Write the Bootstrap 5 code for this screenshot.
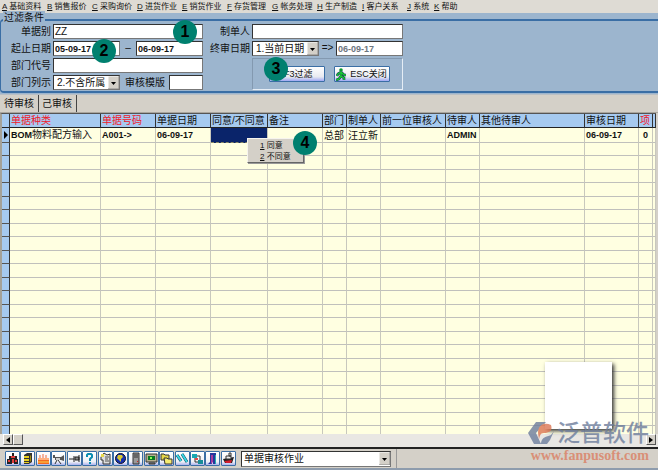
<!DOCTYPE html>
<html lang="zh-CN">
<head>
<meta charset="utf-8">
<meta name="viewport" content="width=device-width, initial-scale=1">
<title>单据审核作业</title>
<link href="https://cdn.jsdelivr.net/npm/bootstrap@5.3.0/dist/css/bootstrap.min.css" rel="stylesheet">
<style>
body{background:#d4d0c8;color:#111;font:10px/14px "Liberation Sans","Noto Sans CJK SC",sans-serif}
input,select,button{font:inherit;color:inherit;border-radius:0}
.menu-bar{height:13px;padding-left:2px;font-size:8px;line-height:13px;background:#dedbd4}
.menu-bar a{color:#111;text-decoration:none;white-space:nowrap;flex:0 0 45px}
.menu-bar a.narrow{flex-basis:27px}
.filter{position:relative;height:81px;background:#9cb5ce;padding-top:6px}
.filter-frame{margin:0;height:74px;border:1px solid #3a6ea5;border-width:2px 0 2px 1px;border-radius:4px 0 0 4px;padding:3px 0 0 0}
.filter-title{position:absolute;left:3px;top:-2px;background:#9cb5ce;padding:0 1px;line-height:14px;font-size:10px;width:auto;float:none;margin:0}
.form-grid{display:grid;grid-template-columns:50px 150px 45px 151px;column-gap:2px;grid-auto-rows:15px;row-gap:2px}
.form-grid label{text-align:right;white-space:nowrap;line-height:15px}
.field{border:1px solid #777;border-top-color:#333;border-left-color:#333;background:#fff;height:15px;padding:0 1px;min-width:0;line-height:12px}
.date{font-weight:700;font-size:9px}
.pick{appearance:none;border:1px solid #777;border-top-color:#333;border-left-color:#333;height:15px;padding:0 12px 0 3px;line-height:12px;min-width:0;background:#fff url("data:image/svg+xml,%3Csvg xmlns='http://www.w3.org/2000/svg' width='11' height='13'%3E%3Cpath d='M0 0h11v13H0z' fill='%23d4d0c8'/%3E%3Cpath d='M0 13V0h11' fill='none' stroke='%23fff'/%3E%3Cpath d='M11 0v13H0' fill='none' stroke='%23888'/%3E%3Cpath d='M3 6h5L5.500 9z'/%3E%3C/svg%3E") right center no-repeat}
.w-date{width:67px}
.w-tpl{width:34px}
.cmd-box{grid-row:span 2;border:1px solid #8399b0;border-right-color:#e5edf5;border-bottom-color:#e5edf5;gap:9px;padding-left:3px}
.cmd{width:56px;height:16px;border:1px solid #3a6ea5;border-radius:1px;padding:0;font-size:9px;line-height:12px;background:linear-gradient(#fff,#e8eaf0 70%,#9fa8f4);white-space:nowrap}
.cmd-filter{padding-right:11px}
.step{position:absolute;width:24px;height:24px;border-radius:50%;background:#00806f;color:#000;font-weight:700;font-size:16px;line-height:24px;text-align:center;z-index:5}
.s1{left:173px;top:20px}.s2{left:92px;top:39px}.s3{left:264px;top:57px}.s4{left:293px;top:131px}
.tabs{height:19px;border-bottom:1px solid #aaa69e;border-top:1px solid #b9bfc5}
.tabs button{border:0;border-right:1px solid #444;background:none;padding:0 4px 0 3px;height:17px;line-height:17px}
.tabs button:first-child{padding-left:4px}
.grid-pane{flex:1 1 0;min-height:0;overflow:hidden;background:#ffffe1;border-left:2px solid #a5a299;border-top:1px solid #555;margin-right:2px}
.sheet{width:100%;table-layout:fixed;border-collapse:separate;border-spacing:0;white-space:nowrap}
.sheet th,.sheet td{padding:0 0 0 1px;overflow:hidden;height:13px;line-height:12px;border-right:1px solid #c8c8bd;border-bottom:1px solid #c0c0bc}
.sheet tr:nth-child(odd) td{height:14px;line-height:13px}
.sheet thead th{height:14px;line-height:13px;font-weight:400;background:#a6caf0;border-right:1px solid #333;border-bottom:1px solid #222}
.sheet thead th.hot{color:#f01828}
.sheet td:first-child{background:#a6caf0;border-right-color:#333;border-bottom-color:#555}
.sheet .lat{font-weight:700;font-size:9px}
.sheet td.picked{background:#0a246a;border-bottom:1px dashed #886}
.popup{position:absolute;left:247px;top:138px;width:57px;height:25px;background:#d4d0c8;border:1px solid #f6f4ee;border-right-color:#666;border-bottom-color:#666;padding:1px 0 0 12px;font-size:8px;z-index:4;margin:0;list-style:none;box-shadow:1px 1px 0 #999}
.popup button{display:block;border:0;background:none;padding:0;line-height:11px;height:11px}
.scroll-strip{height:13px;background:#e9e7e3;padding:0 2px 0 3px}
.knob{width:10px;height:11px;padding:0;background:#d4d0c8;border:1px solid #fff;border-right-color:#555;border-bottom-color:#555;display:flex;align-items:center;justify-content:center}
.tool-strip{height:21px;border-top:2px solid #222;padding-left:5px}
.tool-set{width:231px}
.tool{width:15px;height:15px;padding:0;border:1px solid #3a6ea5;border-radius:1px;background:linear-gradient(#fff,#eef0f5 75%,#abb2ee);display:flex}
.tool svg{width:13px;height:13px}
.status-pick{width:150px;height:16px;margin-left:5px;padding-left:2px}
.tool-tail{flex:1;height:100%;border-left:1px solid #999;margin-left:5px}
.blank-note{position:absolute;right:46px;bottom:41px;width:67px;height:67px;background:#fff;box-shadow:2px 2px 4px #333;z-index:2}
.brand{position:absolute;right:9px;bottom:8px;width:121px;z-index:3;opacity:.8}
.brand-name{font-size:23px;line-height:23px;color:#6d7d9c;font-weight:500}
.brand-url{font:700 14px/13px "Liberation Serif",serif;color:#db8063;text-align:right}
.base-line{height:2px;background:#8e9cad}
</style>
<script src="https://cdn.jsdelivr.net/npm/bootstrap@5.3.0/dist/js/bootstrap.bundle.min.js"></script>
</head>
<body class="position-relative overflow-hidden">
<div class="d-flex flex-column vh-100">
<nav class="menu-bar d-flex">
<a href="#"><u>A</u> 基础资料</a><a href="#"><u>B</u> 销售报价</a><a href="#"><u>C</u> 采购询价</a><a href="#"><u>D</u> 进货作业</a><a href="#"><u>E</u> 销货作业</a><a href="#"><u>F</u> 存货管理</a><a href="#"><u>G</u> 帐务处理</a><a href="#"><u>H</u> 生产制造</a><a href="#"><u>I</u> 客户关系</a><a href="#" class="narrow"><u>J</u> 系统</a><a href="#" class="narrow"><u>K</u> 帮助</a>
</nav>
<form class="filter">
<fieldset class="filter-frame">
<legend class="filter-title">过滤条件</legend>
<div class="form-grid">
<label for="kind">单据别</label><input class="field" id="kind" value="ZZ">
<label for="maker">制单人</label><input class="field" id="maker">
<label for="from">起止日期</label>
<div class="d-flex justify-content-between"><input class="field date w-date" id="from" value="05-09-17"><span>–</span><input class="field date w-date" aria-label="截止日期" value="06-09-17"></div>
<label for="final">终审日期</label>
<div class="d-flex justify-content-between"><select class="pick w-date" id="final"><option>1.当前日期</option></select><span>=&gt;</span><input class="field date w-date text-secondary" aria-label="终审截止" value="06-09-17"></div>
<label for="dept">部门代号</label><input class="field" id="dept"><span></span>
<div class="cmd-box d-flex justify-content-center align-items-center">
<button type="button" class="cmd cmd-filter text-end">F3过滤</button>
<button type="button" class="cmd d-flex align-items-center justify-content-center gap-1"><svg width="10" height="13" viewBox="0 0 10 13"><circle cx="5" cy="2" r="1.800" fill="#0a9a30"/><path d="M5 4 2 6 1 8M5 4l3 3h2M5 4v4l3 2v2M5 8l-2 3-3 1" fill="none" stroke="#12305a" stroke-width="2.600"/><path d="M5 4 2 6 1 8M5 4l3 3h2M5 4v4l3 2v2M5 8l-2 3-3 1" fill="none" stroke="#19c832" stroke-width="1.500"/></svg>ESC关闭</button>
</div>
<label for="list">部门列示</label>
<div class="d-flex justify-content-between"><select class="pick w-date" id="list"><option>2.不含所属</option></select><div class="d-flex"><label for="tpl">审核模版</label><input class="field w-tpl ms-1" id="tpl"></div></div>
</div>
</fieldset>
</form>
<div class="tabs d-flex" role="tablist"><button type="button" role="tab" aria-selected="true">待审核</button><button type="button" role="tab">己审核</button></div>
<main class="grid-pane">
<table class="sheet">
<colgroup><col style="width:8px"><col style="width:91px"><col style="width:55px"><col style="width:55px"><col style="width:57px"><col style="width:55px"><col style="width:24px"><col style="width:34px"><col style="width:65px"><col style="width:34px"><col><col style="width:54px"><col style="width:14px"><col style="width:3px"></colgroup>
<thead><tr><th></th><th class="hot">单据种类</th><th class="hot">单据号码</th><th>单据日期</th><th>同意/不同意</th><th>备注</th><th>部门</th><th>制单人</th><th>前一位审核人</th><th>待审人</th><th>其他待审人</th><th>审核日期</th><th class="hot">项</th><th></th></tr></thead>
<tbody id="rows"><tr><td><svg class="d-block" width="5" height="8" viewBox="0 0 5 8"><path d="M1 0v8l4-4z"/></svg></td><td><span class="lat">BOM</span>物料配方输入</td><td class="lat">A001-&gt;</td><td class="lat">06-09-17</td><td class="picked"></td><td></td><td>总部</td><td>汪立新</td><td></td><td class="lat">ADMIN</td><td></td><td class="lat">06-09-17</td><td class="lat text-end pe-1">0</td><td></td></tr></tbody>
</table>
</main>
<div class="scroll-strip d-flex"><button class="knob" aria-label="向左"><svg width="4" height="6"><path d="M4 0v6L0 3z"/></svg></button><button class="knob" aria-label="滑块"></button><button class="knob ms-auto" aria-label="向右"><svg width="4" height="6"><path d="M0 0v6l4-3z"/></svg></button></div>
<footer class="tool-strip d-flex align-items-center">
<div class="tool-set d-flex justify-content-between">
<button class="tool" aria-label="组织"><svg viewBox="0 0 13 13"><path d="M6 1h2v3h3v3h1v5H8V9H6v3H1V7h2V4h3z" fill="#222"/><path d="M5 4h4v2H5zM2 8h2v2H2zM9 8h2v2H9zM6 7h2v4H6z" fill="#e23b3b"/></svg></button>
<button class="tool" aria-label="资料柜"><svg viewBox="0 0 13 13"><path d="m3 3 3-2h5v9l-3 2H3z" fill="#333"/><path d="M3 4h5v2H3zm0 3h5v2H3zm0 3h5v1H3z" fill="#e7cf20"/><path d="m9 4 1-1v6l-1 1z" fill="#9c8a10"/></svg></button>
<button class="tool" aria-label="蛋糕"><svg viewBox="0 0 13 13"><path d="M1 6h11v6H1z" fill="#f26a20"/><path d="M1 6h11v2H1z" fill="#ffb080"/><path d="M3 3v3m3-4v4m3-3v3" stroke="#ee6a40"/><path d="M1 10h11" stroke="#ffd44c"/></svg></button>
<button class="tool" aria-label="摄像"><svg viewBox="0 0 13 13"><path d="M1 3h2v2h6l3-2v6L9 8H3V6H1z" fill="#555"/><path d="M4 6h4v2H4z" fill="#ccc"/><path d="m5 8-2 4m3-4 3 4" stroke="#333"/></svg></button>
<button class="tool" aria-label="固定"><svg viewBox="0 0 13 13"><path d="M1 7h5" stroke="#222"/><path d="M6 4v6M7 5h4v3H7zM11 3v7" fill="#888" stroke="#222"/></svg></button>
<button class="tool" aria-label="帮助"><svg viewBox="0 0 13 13"><path d="M4 5V3l1-1h3l1 1v2L7 7v2M7 10v2" fill="none" stroke="#0b8db0" stroke-width="2"/></svg></button>
<button class="tool" aria-label="主页"><svg viewBox="0 0 13 13"><path d="M2 5 5 1l3 2 3-1v10H4V8H2z" fill="#ddd" stroke="#333"/><path d="M2 2h3v3H2z" fill="#e8d84b"/><path d="M6 5h4M6 7h3m-3 2h4" stroke="#555"/></svg></button>
<button class="tool" aria-label="网络"><svg viewBox="0 0 13 13"><circle cx="6.500" cy="6.500" r="5" fill="#1630b0" stroke="#112"/><path d="M4 3h4l1 2-2 2v3L5 8 3 6z" fill="#d8c832"/></svg></button>
<button class="tool" aria-label="主机"><svg viewBox="0 0 13 13"><path d="M4 1h6v11H4z" fill="#999" stroke="#333"/><path d="M5 3h4M5 5h4" stroke="#333"/><path d="M8 9h1v1H8z" fill="#d22"/></svg></button>
<button class="tool" aria-label="显示器"><svg viewBox="0 0 13 13"><path d="M1 2h11v8H1zM4 11h6v1H4z" fill="#b5b090" stroke="#333"/><path d="M3 4h7v4H3z" fill="#087820"/><path d="M5 5h2v2H5z" fill="#8f5"/></svg></button>
<button class="tool" aria-label="文件夹"><svg viewBox="0 0 13 13"><path d="M1 2h3l1 1h4v5H1z" fill="#e5d549" stroke="#333"/><path d="M4 6h3l1 1h4v5H5z" fill="#f5eb71" stroke="#333"/></svg></button>
<button class="tool" aria-label="工具"><svg viewBox="0 0 13 13"><path d="m1 3 4 6M6 2l5 8" stroke="#145" stroke-width="3"/><path d="m1 3 4 6M6 2l5 8" stroke="#39d6e4" stroke-width="2"/></svg></button>
<button class="tool" aria-label="流程"><svg viewBox="0 0 13 13"><path d="M4 4h5v5M4 4v6h4" fill="none" stroke="#333"/><path d="M1 2h5v4H1z" fill="#19a7b2"/><path d="M7 8h5v4H7z" fill="#198e98"/><path d="M4 6h3v2H4z" fill="#e54949"/></svg></button>
<button class="tool" aria-label="退出"><svg viewBox="0 0 13 13"><path d="M4 1h6v11H7V3H6v9H2l2-2z" fill="#25369c"/><path d="M5 3h2v7l-2 2z" fill="#a83a9c"/><path d="M9 3h1v9H9z" fill="#22aeb0"/></svg></button>
<button class="tool" aria-label="轮船"><svg viewBox="0 0 13 13"><path d="m1 7 11-2-2 6H3z" fill="#222"/><path d="M4 4h5v3H4zM7 1h2v3H7z" fill="#eee" stroke="#333"/><path d="m2 9 8-1-1 3H4z" fill="#d31c2c"/></svg></button>
</div>
<select class="pick status-pick" aria-label="当前作业"><option>单据审核作业</option></select>
<div class="tool-tail"></div>
</footer>
<div class="base-line"></div>
</div>
<span class="step s1">1</span><span class="step s2">2</span><span class="step s3">3</span><span class="step s4">4</span>
<ul class="popup"><li><button type="button"><u>1</u> 同意</button></li><li><button type="button"><u>2</u> 不同意</button></li></ul>
<div class="blank-note"></div>
<div class="brand"><div class="d-flex align-items-center justify-content-between mb-1"><svg width="27" height="23" viewBox="0 0 27 23"><path d="M8 0h10L8 11l5 11H6L0 11z" fill="#6d7d9c"/><path d="M10 11c0-9 7-11 13-8 2 6-2 8-7 8-4 0-4 3-5 6z" fill="#dc7653"/><path d="M13 21c1-6 5-6 10-8l3-4-4 9-3 4h-7z" fill="#6d7d9c"/></svg><span class="brand-name">泛普软件</span></div><div class="brand-url">www.fanpusoft.com</div></div>
<script>
const rows = document.getElementById('rows');
for (let i = 0; i < 60; i++) {
  const tr = rows.insertRow();
  for (let c = 0; c < 14; c++) tr.insertCell();
}
</script>
</body>
</html>
